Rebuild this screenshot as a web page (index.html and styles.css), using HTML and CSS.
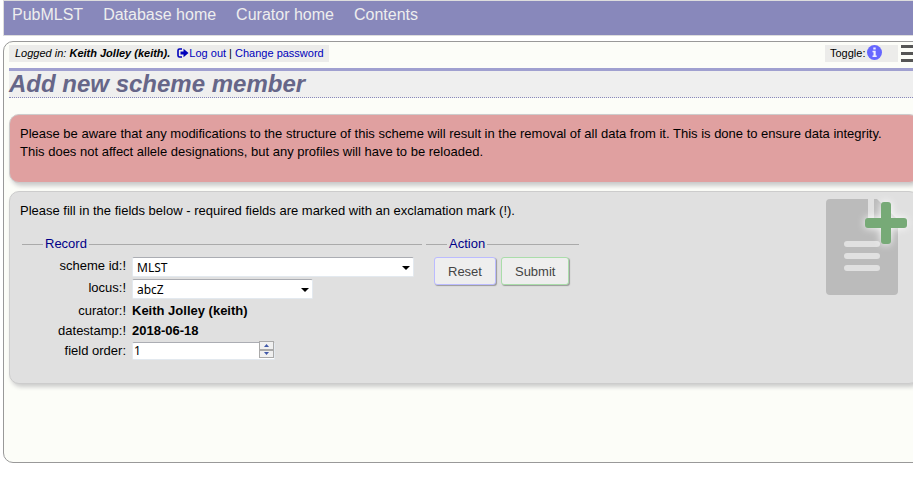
FILE: index.html
```html
<!DOCTYPE html>
<html lang="en">
<head>
<meta charset="utf-8">
<title>Add new scheme member</title>
<link rel="stylesheet" href="styles.css">
</head>
<body>
<nav class="menu">
  <a href="#">PubMLST</a>
  <a href="#">Database home</a>
  <a href="#">Curator home</a>
  <a href="#">Contents</a>
</nav>
<main class="page">
  <div class="topbar">
    <div class="login"><i>Logged in: <b>Keith Jolley (keith).</b></i> <a href="#"><svg class="exit" viewBox="0 0 12 10" aria-hidden="true"><path d="M5 1H2.500Q1 1 1 2.500V7.500Q1 9 2.500 9H5" fill="none" stroke="currentColor" stroke-width="1.600"/><path d="M3.500 3.500H6.500V.8L11.500 5 6.500 9.200V6.500H3.500Z" fill="currentColor"/></svg>Log out</a> | <a href="#">Change password</a></div>
    <div class="tools">
      <div class="toggle">Toggle: <a href="#" aria-label="Toggle help"><svg class="info" viewBox="0 0 15 15" aria-hidden="true"><circle cx="7.500" cy="7.500" r="7.500" fill="#66f"/><path d="M6.300 2.500h2.400v2H6.300zM5.500 5.800h3.200v4.700h1v1.500H5.500v-1.500h1V7.300h-1z" fill="#eef"/></svg></a></div>
      <button class="burger" type="button" aria-label="Menu"><span></span><span></span><span></span></button>
    </div>
  </div>
  <h1>Add new scheme member</h1>
  <section class="box warning">
    <p>Please be aware that any modifications to the structure of this scheme will result in the removal of all data from it. This is done to ensure data integrity.<br>This does not affect allele designations, but any profiles will have to be reloaded.</p>
  </section>
  <section class="box entry">
    <div class="content">
      <p>Please fill in the fields below - required fields are marked with an exclamation mark (!).</p>
      <form class="form">
        <fieldset class="record">
          <legend>Record</legend>
          <div class="fields">
            <label for="scheme">scheme id:!</label>
            <div class="select wide"><select id="scheme"><option>MLST</option></select><svg viewBox="0 0 8 4" aria-hidden="true"><path d="M0 0h8L4 4z"/></svg></div>
            <label for="locus">locus:!</label>
            <div class="select"><select id="locus"><option>abcZ</option></select><svg viewBox="0 0 8 4" aria-hidden="true"><path d="M0 0h8L4 4z"/></svg></div>
            <span class="name">curator:!</span><b>Keith Jolley (keith)</b>
            <span class="name">datestamp:!</span><b>2018-06-18</b>
            <label for="order">field order:</label>
            <div class="number">
              <input id="order" type="number" value="1">
              <div class="spin">
                <button type="button" aria-label="Increase"><svg viewBox="0 0 5 3" aria-hidden="true"><path d="M0 3h5L2.500 0z"/></svg></button>
                <button type="button" aria-label="Decrease"><svg viewBox="0 0 5 3" aria-hidden="true"><path d="M0 0h5L2.500 3z"/></svg></button>
              </div>
            </div>
          </div>
        </fieldset>
        <fieldset class="action">
          <legend>Action</legend>
          <div class="buttons">
            <button class="btn reset" type="reset">Reset</button>
            <button class="btn submit" type="submit">Submit</button>
          </div>
        </fieldset>
      </form>
    </div>
    <svg class="addicon" viewBox="0 0 88 104" aria-hidden="true">
      <path d="M4 4H42V28Q42 32 46 32H72V96Q72 100 68 100H4Q0 100 0 96V8Q0 4 4 4Z" fill="#bbb"/>
      <path d="M48 4H51L72 25V28H48Z" fill="#bbb"/>
      <path d="M21 49H51M21 61H51M21 73H51" stroke="#e0e0e0" stroke-width="6" stroke-linecap="round"/>
      <g class="plus"><rect x="55" y="7" width="10" height="42" rx="3"/><rect x="39" y="23" width="42" height="10" rx="3"/></g>
    </svg>
  </section>
</main>
</body>
</html>
```
FILE: styles.css
```css
* { box-sizing: border-box; }

body {
  margin: 0;
  padding-left: 3px;
  background: #fff;
  color: #000;
  font: 13px/18px "Liberation Sans", Arial, sans-serif;
  overflow: hidden;
}

a { color: #00b; text-decoration: none; }
p { margin: 0; }

.menu {
  display: flex;
  gap: 20px;
  padding: 5px 8px 11px;
  background: #8888bb;
  border: 1px solid #ddd;
  border-right: 0;
  font-size: 16px;
}
.menu a { color: #eee; }

.page {
  margin: 5px -12px 0 0;
  padding: 3px 5px 78px;
  background: #fcfdf8;
  border: 1px solid #999;
  border-radius: 10px;
}

.topbar {
  display: flex;
  justify-content: space-between;
  font-size: 11px;
  line-height: 17px;
}
.login { padding: 0 5px 0 6px; background: #ececea; }
.exit { width: 12px; height: 10px; margin-left: 4px; vertical-align: -1px; }
.tools { display: flex; gap: 3px; }
.toggle {
  display: flex;
  gap: 2px;
  width: 73px;
  padding-left: 5px;
  background: #ececea;
}
.info { display: block; width: 15px; height: 15px; }
.burger {
  display: flex;
  flex-direction: column;
  justify-content: space-between;
  width: 18px;
  height: 17px;
  padding: 0;
  border: 0;
  background: none;
}
.burger span { height: 3px; background: #555; }

h1 {
  margin: 6px 0 16px;
  border-top: 3px solid #a0a0d0;
  border-bottom: 1px dotted #8888bb;
  background: #efefef;
  color: #666688;
  font: italic bold 24px/26px "Liberation Sans", Arial, sans-serif;
}

.box {
  border: 1px solid #ccc;
  border-radius: 10px;
  box-shadow: 2px 3px 4px #ccc;
  padding: 10px;
}
.warning { padding-bottom: 21px; background: #e0a0a0; }
.entry {
  display: flex;
  justify-content: space-between;
  margin-top: 8px;
  padding: 10px 4px 22px 10px;
  background: #e0e0e0;
}

.form { display: flex; gap: 4px; margin: 16px 0 0 2px; }
fieldset { min-width: 0; margin: 0; padding: 0; border: 0; border-top: 1px solid #aaa; }
legend { margin-left: 21px; padding: 0 2px; color: #008; line-height: 16px; }
.record { width: 400px; }
.action { width: 153px; }

.fields {
  display: grid;
  grid-template-columns: 104px auto;
  column-gap: 6px;
  grid-template-rows: 22px 22px 20px 20px 20px;
  padding-top: 5px;
  line-height: 20px;
}
.fields label, .name { text-align: right; }
.fields label { line-height: 17px; }
.fields label[for="order"] { line-height: 20px; }
.select { position: relative; width: 181px; height: 20px; }
.wide { width: 282px; }
.select select, .number input {
  width: 100%;
  height: 100%;
  margin: 0;
  border: 1px solid #e3e9ef;
  border-top-color: #abadb3;
  border-radius: 2px;
  background: #fff;
  color: #000;
  font: 12px "Noto Sans", sans-serif;
  appearance: none;
}
.select select { padding: 0 4px; }
.select svg { position: absolute; right: 4px; top: 9px; width: 8px; height: 4px; }
.number { position: relative; width: 143px; height: 18px; }
.number input { padding: 0 1px; appearance: textfield; }
.spin {
  position: absolute;
  top: 0;
  right: 1px;
  display: grid;
  grid-template-rows: 1fr 1fr;
  width: 15px;
  height: 17px;
}
.spin button {
  display: grid;
  place-items: center;
  padding: 0;
  border: 1px solid #aaa;
  background: #f0f0f0;
}
.spin svg { width: 5px; height: 3px; fill: #4058a8; }

.buttons { display: flex; gap: 5px; padding: 5px 8px; }
.btn {
  height: 28px;
  padding: 0 13px;
  border: 1px solid;
  border-radius: 3px;
  background: #eee;
  box-shadow: 1px 1px 1px #999;
  color: #444;
  font: 13px "Liberation Sans", Arial, sans-serif;
}
.reset { border-color: #bbf; }
.submit { border-color: #ada; }

.addicon { flex: none; width: 88px; height: 104px; margin-top: -7px; }
.plus { fill: #7a7; filter: drop-shadow(0 0 4px #fff); }
```
